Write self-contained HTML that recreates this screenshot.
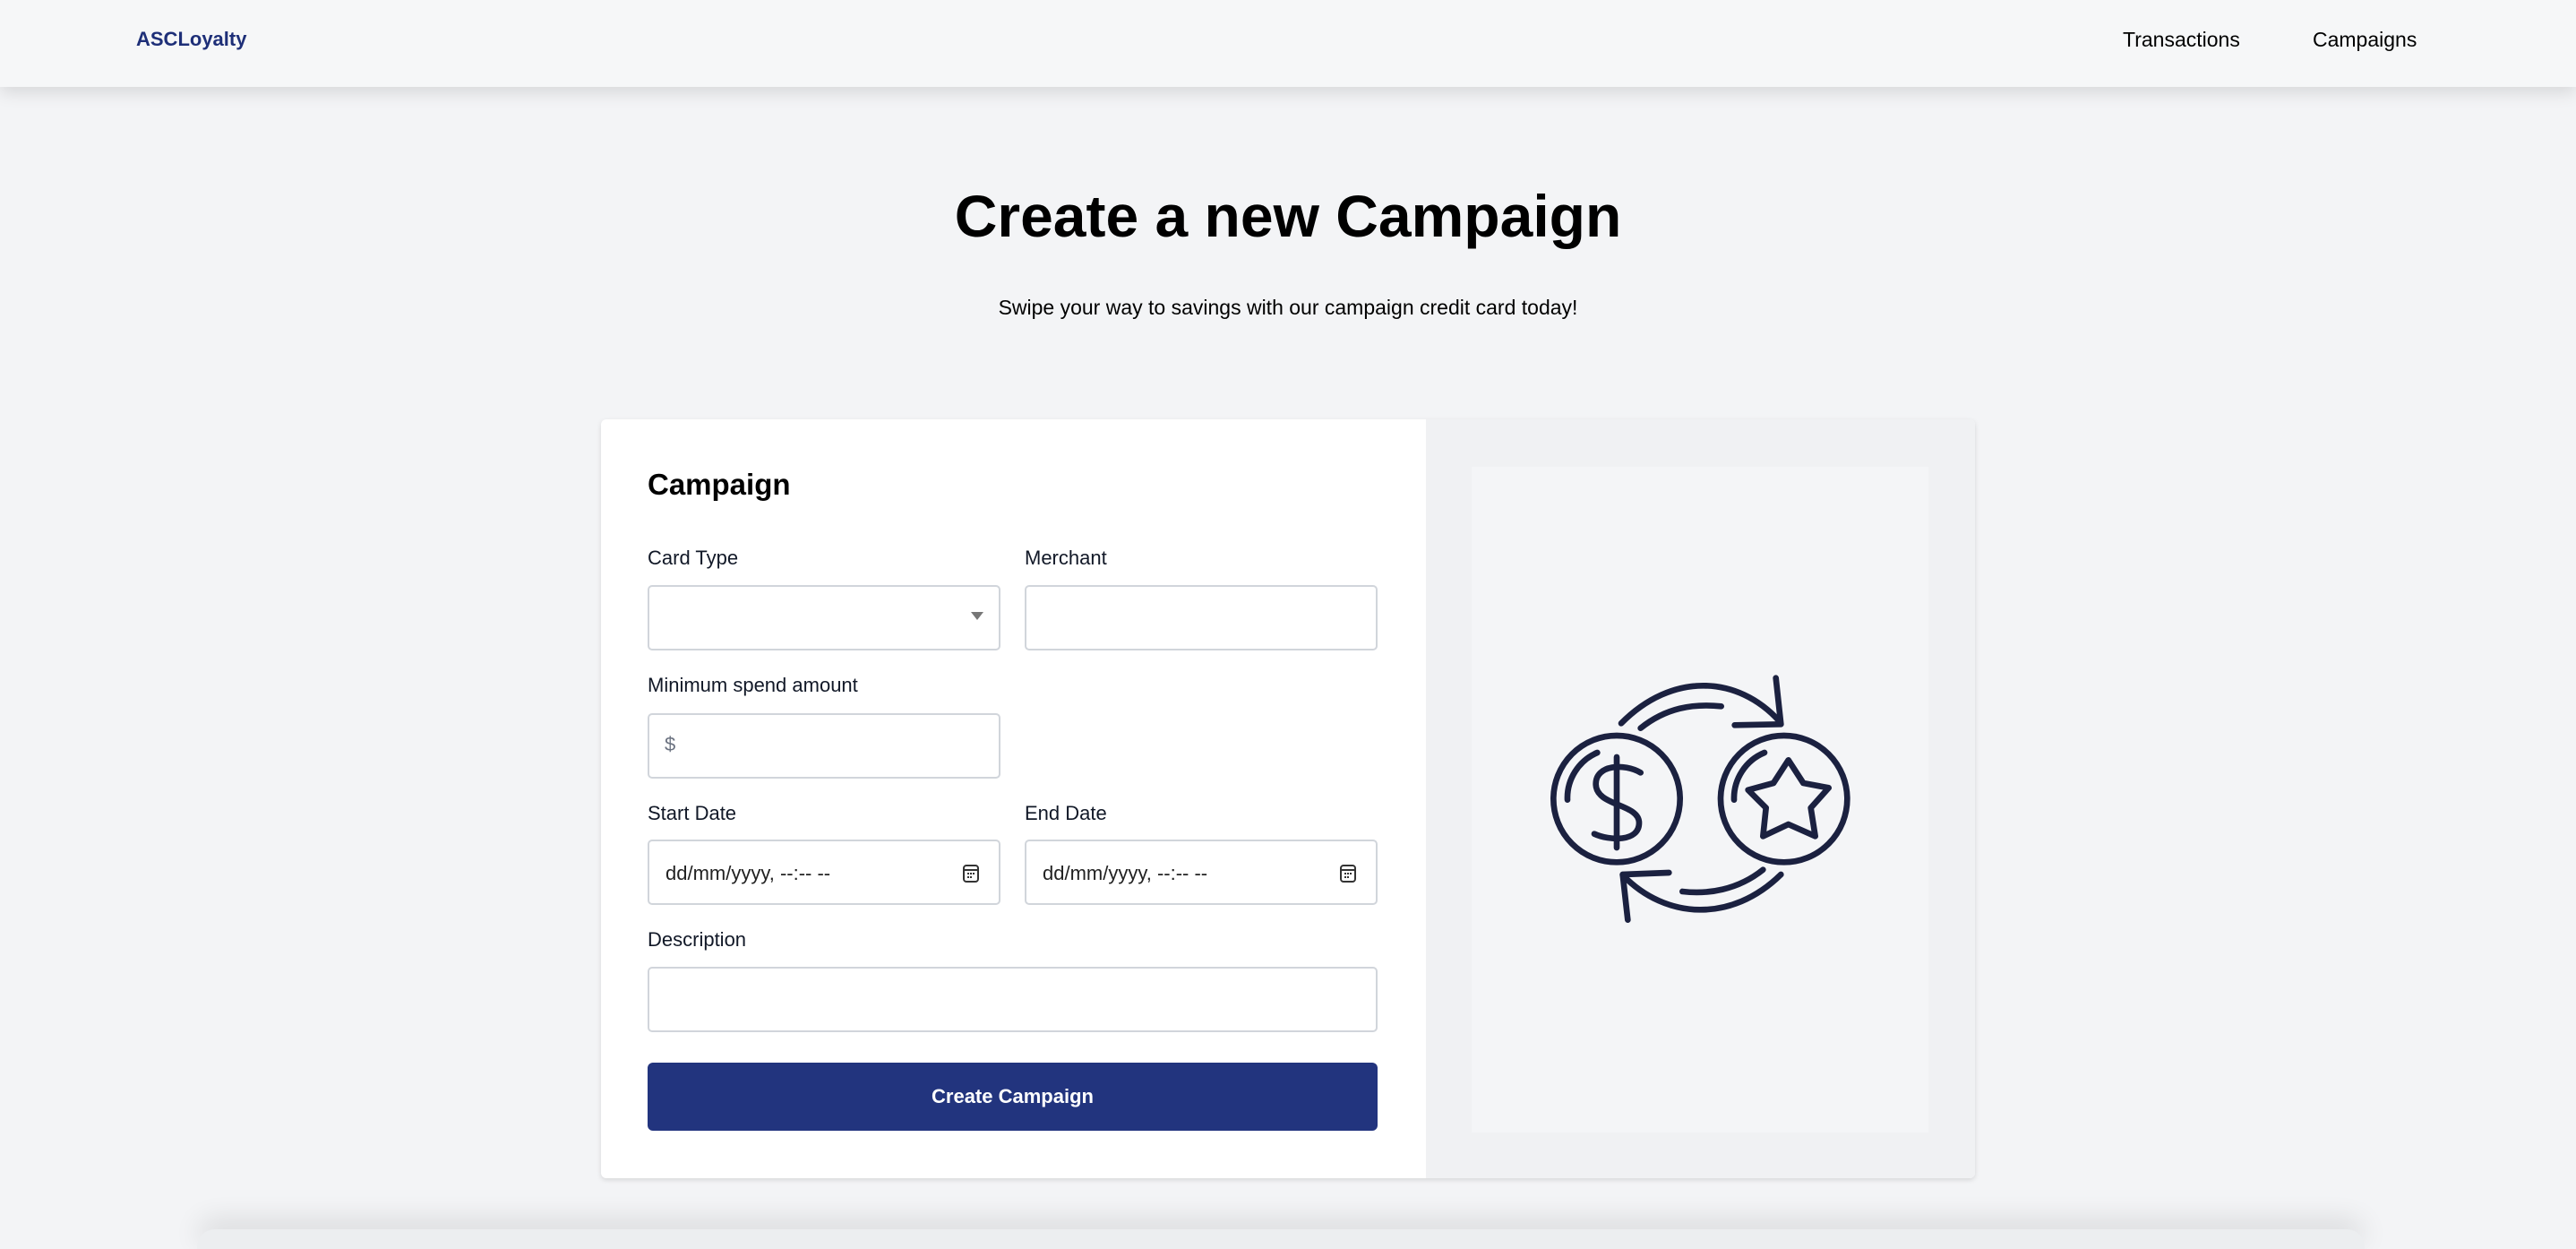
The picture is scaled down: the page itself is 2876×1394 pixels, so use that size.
<!DOCTYPE html>
<html style="width:2876px;height:1394px;overflow:hidden"><head><meta charset="utf-8"><style>
*{margin:0;padding:0;box-sizing:border-box}
body{width:2876px;height:1394px;background:#f3f4f6;font-family:"Liberation Sans",sans-serif;position:relative;overflow:hidden;color:#000}
.hdr{position:absolute;left:0;top:0;width:2876px;height:97px;background:#f6f7f8;box-shadow:0 6px 18px rgba(0,0,0,.12)}
.abs{position:absolute;white-space:nowrap}
.lbl{font-size:22px;color:#111827}
.inp{position:absolute;background:#fff;border:2px solid #d1d5db;border-radius:5px;height:73px}
.foot{position:absolute;left:220px;top:1372px;width:2420px;height:22px;background:#eceef0;box-shadow:0 -10px 30px rgba(0,0,0,.12);border-radius:20px 20px 0 0}
</style></head><body>
<div class="hdr"></div>
<div class="abs" style="left:152px;top:31px;font-size:22px;font-weight:bold;color:#1e2f78">ASCLoyalty</div>
<div class="abs" style="left:2370px;top:31px;font-size:23px;color:#000">Transactions</div>
<div class="abs" style="left:2582px;top:31px;font-size:23px;color:#000">Campaigns</div>
<div class="abs" style="left:0;width:2876px;text-align:center;top:203px;font-size:66px;font-weight:bold">Create a new Campaign</div>
<div class="abs" style="left:0;width:2876px;text-align:center;top:330px;font-size:23px">Swipe your way to savings with our campaign credit card today!</div>
<div class="foot"></div>
<div style="position:absolute;left:671px;top:468px;width:1534px;height:847px;background:#fff;border-radius:6px;box-shadow:0 2px 6px rgba(0,0,0,.12)"></div>
<div style="position:absolute;left:1592px;top:468px;width:613px;height:847px;background:#f0f1f3;border-radius:0 6px 6px 0"></div>
<div style="position:absolute;left:1643px;top:521px;width:510px;height:743px;background:#f4f5f7"></div>
<div class="abs" style="left:723px;top:522px;font-size:33px;font-weight:bold">Campaign</div>
<div class="abs lbl" style="left:723px;top:610px">Card Type</div>
<div class="abs lbl" style="left:1144px;top:610px">Merchant</div>
<div class="inp" style="left:723px;top:653px;width:394px"></div>
<div class="abs" style="left:1084px;top:683px;width:0;height:0;border-left:7px solid transparent;border-right:7px solid transparent;border-top:9px solid #777"></div>
<div class="inp" style="left:1144px;top:653px;width:394px"></div>
<div class="abs lbl" style="left:723px;top:752px">Minimum spend amount</div>
<div class="inp" style="left:723px;top:796px;width:394px"></div>
<div class="abs" style="left:742px;top:818px;font-size:22px;color:#6b7280">$</div>
<div class="abs lbl" style="left:723px;top:895px">Start Date</div>
<div class="abs lbl" style="left:1144px;top:895px">End Date</div>
<div class="inp" style="left:723px;top:937px;width:394px"></div>
<div class="inp" style="left:1144px;top:937px;width:394px"></div>
<div class="abs" style="left:743px;top:962px;font-size:22px;color:#222">dd/mm/yyyy, --:-- --</div>
<div class="abs" style="left:1164px;top:962px;font-size:22px;color:#222">dd/mm/yyyy, --:-- --</div>
<svg class="abs" style="left:1074px;top:964px" width="20" height="22" viewBox="0 0 20 22"><rect x="2" y="2" width="16" height="18" rx="3" fill="none" stroke="#333" stroke-width="2"/><line x1="2" y1="7" x2="18" y2="7" stroke="#333" stroke-width="2"/><g fill="#333"><rect x="6" y="10" width="2" height="2"/><rect x="9" y="10" width="2" height="2"/><rect x="12" y="10" width="2" height="2"/><rect x="6" y="14" width="2" height="2"/><rect x="9" y="14" width="2" height="2"/></g></svg>
<svg class="abs" style="left:1495px;top:964px" width="20" height="22" viewBox="0 0 20 22"><rect x="2" y="2" width="16" height="18" rx="3" fill="none" stroke="#333" stroke-width="2"/><line x1="2" y1="7" x2="18" y2="7" stroke="#333" stroke-width="2"/><g fill="#333"><rect x="6" y="10" width="2" height="2"/><rect x="9" y="10" width="2" height="2"/><rect x="12" y="10" width="2" height="2"/><rect x="6" y="14" width="2" height="2"/><rect x="9" y="14" width="2" height="2"/></g></svg>
<div class="abs lbl" style="left:723px;top:1036px">Description</div>
<div class="inp" style="left:723px;top:1079px;width:815px"></div>
<div class="abs" style="left:723px;top:1186px;width:815px;height:76px;background:#22347e;border-radius:6px;color:#fff;font-size:22px;font-weight:bold;text-align:center;line-height:76px">Create Campaign</div>
<svg class="abs" style="left:1700px;top:700px" width="450" height="360" viewBox="0 0 1350 1080" fill="none" stroke="#1b2140" stroke-width="20" stroke-linecap="round" stroke-linejoin="round">
<circle cx="315" cy="575" r="212"/>
<path d="M150 578 A165 165 0 0 1 250 420"/>
<path d="M315 435 L315 738"/>
<path d="M395 487 C340 455 245 460 245 525 C245 600 390 590 390 655 C390 720 290 715 240 692"/>
<circle cx="875" cy="575" r="212"/>
<path d="M708 578 A165 165 0 0 1 810 420"/>
<path d="M890 445 L940 522 L1025 538 L965 605 L980 700 L890 660 L805 700 L815 605 L755 545 L840 522 Z"/>
<path d="M330 322 C500 150 720 160 860 315"/>
<path d="M395 338 C480 270 570 255 665 265"/>
<path d="M848 170 L865 325 L710 328"/>
<path d="M865 828 C700 990 480 980 335 830"/>
<path d="M805 812 C720 880 620 895 535 885"/>
<path d="M352 980 L335 828 L490 822"/>
</svg>
</body></html>
